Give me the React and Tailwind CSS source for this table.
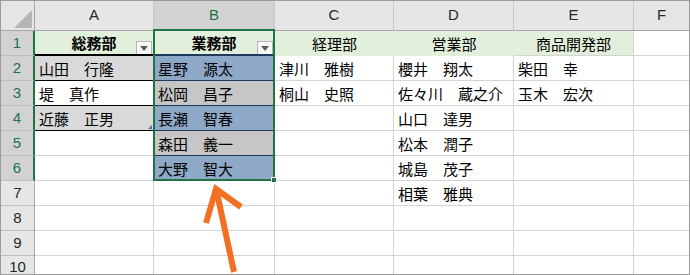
import React from 'react';

const jp = "font-['Noto_Sans_CJK_JP',sans-serif]";

// 1px grey gridline on every sheet cell
const grid = 'border-r border-b border-[#d4d4d4]';

const FilterButton = () => (
  <span className="absolute right-[1px] top-[10px] flex h-[14px] w-[16px] items-center justify-center border border-[#b5b5b5] bg-[#f7f7f7]">
    <svg width="8" height="5" viewBox="0 0 8 5">
      <path d="M0 0 H8 L4 5 Z" fill="#5a5a5a" />
    </svg>
  </span>
);

const ColHead = ({ label, active, last }) => (
  <div
    className={`flex items-center justify-center border-b border-[#a6a6a6] text-[15px] font-['Liberation_Sans',sans-serif] ${
      last ? '' : 'border-r border-r-[#c8c8c8]'
    } ${active ? 'bg-[#d2d2d2] text-[#217346]' : 'bg-[#e6e6e6] text-[#262626]'}`}
  >
    {label}
  </div>
);

const RowHead = ({ n, active }) => (
  <div
    className={`flex items-center justify-center border-b text-[15px] font-['Liberation_Sans',sans-serif] ${
      active
        ? 'border-r-2 border-r-[#217346] border-b-[#bdbdbd] bg-[#d2d2d2] text-[#217346]'
        : 'border-r border-r-[#a6a6a6] border-b-[#bdbdbd] bg-[#e6e6e6] text-[#262626]'
    }`}
  >
    {n}
  </div>
);

const Cell = ({ children, className = grid, center, bold }) => (
  <div
    className={`relative flex items-center overflow-hidden whitespace-pre text-[15px] leading-none text-black ${jp} ${className} ${
      center ? 'justify-center' : 'pl-[4px]'
    } ${bold ? 'font-bold' : ''}`}
  >
    {children}
  </div>
);

const Blank = ({ last }) => <div className={last ? 'border-b border-[#d4d4d4]' : grid} />;

const colC = ['津川　雅樹', '桐山　史照'];
const colD = ['櫻井　翔太', '佐々川　蔵之介', '山口　達男', '松本　潤子', '城島　茂子', '相葉　雅典'];
const colE = ['柴田　幸', '玉木　宏次'];
const colA = ['山田　行隆', '堤　真作', '近藤　正男'];
const colB = ['星野　源太', '松岡　昌子', '長瀬　智春', '森田　義一', '大野　智大'];

// table bands: grey/white in A, selection tint over B
const aFill = ['bg-[#d9d9d9]', 'bg-white', 'bg-[#d9d9d9]'];
const bFill = ['bg-[#8ea9c8]', 'bg-[#c6c6c6]', 'bg-[#8ea9c8]', 'bg-[#c6c6c6]', 'bg-[#8ea9c8]'];

export default function App() {
  const rows = [];
  for (let r = 2; r <= 10; r++) {
    const i = r - 2;
    rows.push(
      <React.Fragment key={r}>
        <RowHead n={r} active={r <= 6} />
        {i < 3 ? (
          <Cell className={`border-r border-r-[#d4d4d4] border-b border-b-black ${aFill[i]}`}>
            {colA[i]}
            {i === 2 && (
              <span className="absolute bottom-[1px] right-[1px] h-0 w-0 border-b-[4px] border-l-[4px] border-b-[#4a6fb5] border-l-transparent" />
            )}
          </Cell>
        ) : (
          <Blank />
        )}
        {i < 5 ? (
          <Cell className={`border-r border-r-[#d4d4d4] border-b border-b-[#1f3a5c] ${bFill[i]}`}>{colB[i]}</Cell>
        ) : (
          <Blank />
        )}
        {colC[i] ? <Cell>{colC[i]}</Cell> : <Blank />}
        {colD[i] ? <Cell>{colD[i]}</Cell> : <Blank />}
        {colE[i] ? <Cell>{colE[i]}</Cell> : <Blank />}
        <Blank last />
      </React.Fragment>
    );
  }

  return (
    <div className="relative h-[275px] w-[690px] overflow-hidden border border-[#9b9b9b] bg-white">
      <div className="grid grid-cols-[34px_119px_121px_119px_120px_120px_1fr] grid-rows-[30px_repeat(9,25px)]">
        {/* corner */}
        <div className="relative border-r border-b border-[#a6a6a6] bg-[#e6e6e6]">
          <svg className="absolute right-[2px] bottom-[2px]" width="18" height="18" viewBox="0 0 18 18">
            <path d="M18 0 V18 H0 Z" fill="#b4b4b4" />
          </svg>
        </div>
        <ColHead label="A" />
        <ColHead label="B" active />
        <ColHead label="C" />
        <ColHead label="D" />
        <ColHead label="E" />
        <ColHead label="F" last />

        {/* row 1: table headers */}
        <RowHead n={1} active />
        <Cell center bold className="border-r border-r-[#d4d4d4] border-b-2 border-b-black bg-[#e2efda]">
          総務部
          <FilterButton />
        </Cell>
        <Cell center bold className="border-r border-r-[#d4d4d4] border-b-2 border-b-[#1f3a5c] bg-[#e2efda]">
          業務部
          <FilterButton />
        </Cell>
        <Cell center className="border-b border-b-[#e2efda] bg-[#e2efda]">経理部</Cell>
        <Cell center className="border-b border-b-[#e2efda] bg-[#e2efda]">営業部</Cell>
        <Cell center className={`${grid} bg-[#e2efda]`}>商品開発部</Cell>
        <Blank last />

        {rows}
      </div>

      {/* selection border around B1:B6 with fill handle */}
      <div className="pointer-events-none absolute left-[152px] top-[28px] h-[152px] w-[122px] border-2 border-[#217346]">
        <span className="absolute -bottom-[4px] -right-[4px] h-[6px] w-[6px] border border-white bg-[#217346]" />
      </div>

      {/* callout arrow */}
      <svg className="pointer-events-none absolute left-0 top-0" width="690" height="275" viewBox="0 0 690 275">
        <g fill="none" stroke="#f36f21" strokeWidth="6" strokeLinejoin="miter">
          <path d="M233 271 L216 192" />
          <path d="M205 222 L215 188 L240 206" />
        </g>
      </svg>
    </div>
  );
}
